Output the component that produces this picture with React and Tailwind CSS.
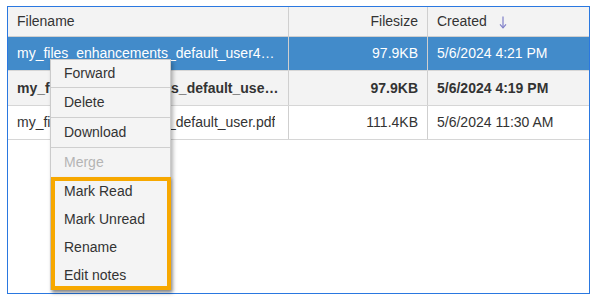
const rows = [
  {
    name: "my_files_enhancements_default_user4.pdf",
    size: "97.9KB",
    created: "5/6/2024 4:21 PM",
    selected: true,
  },
  {
    name: "my_files_enhancements_default_user3.pdf",
    size: "97.9KB",
    created: "5/6/2024 4:19 PM",
    unread: true,
  },
  {
    name: "my_files_enhancements_default_user.pdf",
    size: "111.4KB",
    created: "5/6/2024 11:30 AM",
  },
];

const MenuItem = ({ label, disabled, divider, h = "h-[28px]" }) => (
  <li
    className={`${h} flex items-center pl-[13px] ${divider ? "border-b border-[#cfcfcf]" : ""} ${
      disabled ? "text-[#b4b4b4]" : "text-[#333] hover:bg-[#e6e6e6]"
    }`}
  >
    {label}
  </li>
);

export default function App() {
  return (
    <div className="w-[599px] h-[302px] bg-white pt-[6px] pl-[7px] font-['Liberation_Sans',Arial,sans-serif] text-[14px] text-[#333]">
      <div className="relative w-[583px] h-[288px] border border-[#2a78e0]">
        <div className="grid grid-cols-[281px_139px_1fr] h-[30px] bg-[#f3f3f3] border-b border-[#cfcfcf]">
          <div className="flex items-center pl-[9px] border-r border-[#cfcfcf]">Filename</div>
          <div className="flex items-center justify-end pr-[9px] border-r border-[#cfcfcf]">Filesize</div>
          <div className="flex items-center pl-[9px] gap-[12px]">
            Created
            <svg width="8" height="13" viewBox="0 0 8 13" className="mt-[2px]">
              <path d="M4 0.5V11.5" stroke="#7f7fc8" strokeWidth="1.2" />
              <path d="M1 8.4L4 11.8L7 8.4" stroke="#7f7fc8" strokeWidth="1.2" fill="none" />
            </svg>
          </div>
        </div>
        {rows.map((r, i) => (
          <div
            key={r.created}
            className={`grid grid-cols-[281px_139px_1fr] ${i === 1 ? "h-[35px]" : "h-[34px]"} border-b border-[#d6d6d6] ${
              r.selected ? "bg-[#428bca] text-white" : r.unread ? "bg-[#f3f3f3] font-bold" : "bg-white"
            }`}
          >
            <div
              className={`flex items-center min-w-0 pl-[9px] ${r.selected ? "pr-[12px]" : "pr-[8px]"} border-r border-[#cfcfcf]`}
            >
              <span className="truncate">{r.name}</span>
            </div>
            <div className="flex items-center justify-end pr-[9px] border-r border-[#cfcfcf]">{r.size}</div>
            <div className="flex items-center pl-[9px]">{r.created}</div>
          </div>
        ))}

        <ul className="absolute left-[42px] top-[52px] w-[121px] bg-[#f4f4f4] border border-[#cbcbcb] shadow-[2px_3px_4px_rgba(0,0,0,0.3)] font-normal">
          <MenuItem label="Forward" divider h="h-[28px]" />
          <MenuItem label="Delete" divider h="h-[30px]" />
          <MenuItem label="Download" divider h="h-[30px]" />
          <MenuItem label="Merge" disabled h="h-[29px]" />
          <MenuItem label="Mark Read" />
          <MenuItem label="Mark Unread" />
          <MenuItem label="Rename" />
          <MenuItem label="Edit notes" />
          <div className="absolute left-0 right-[-1px] top-[117px] bottom-[-1px] border-[4px] border-[#f7a800] shadow-[1px_2px_3px_rgba(0,0,0,0.25)] pointer-events-none" />
        </ul>
      </div>
    </div>
  );
}
